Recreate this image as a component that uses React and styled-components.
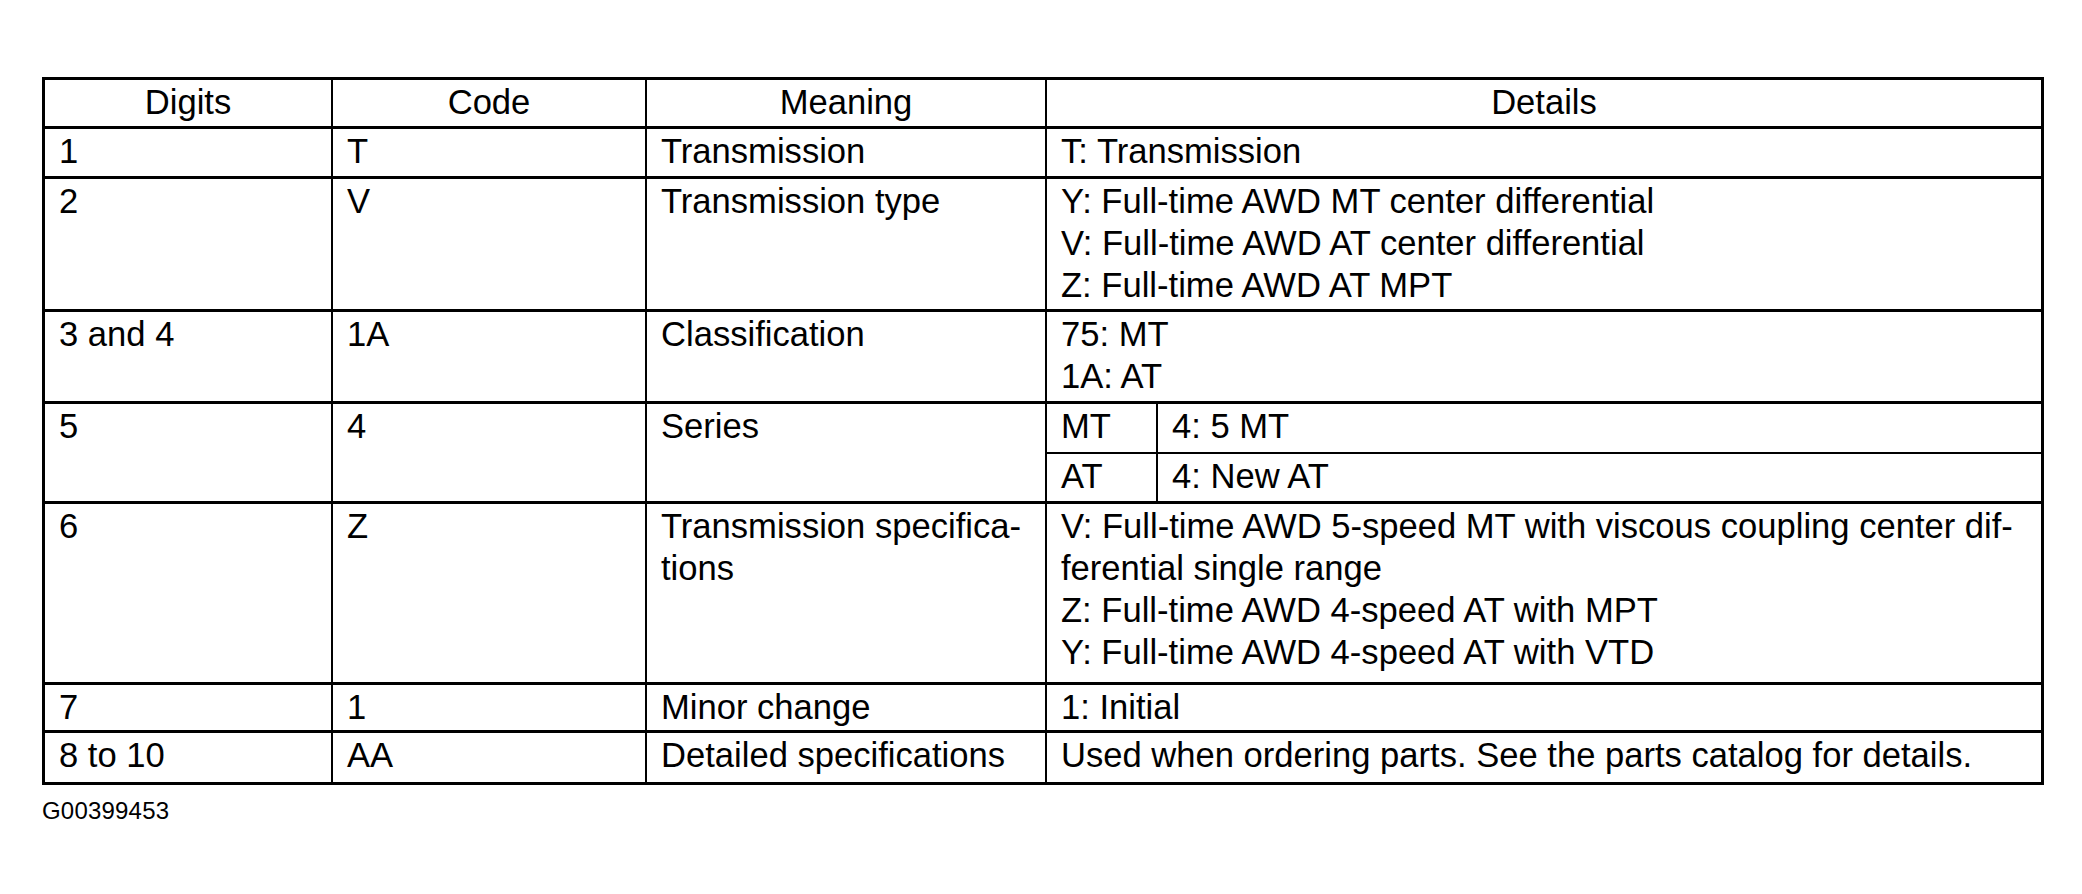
import React from "react";
import styled, { createGlobalStyle } from "styled-components";

const GlobalStyle = createGlobalStyle`
  html, body { margin: 0; padding: 0; background: #fff; }
  body { font-family: "Liberation Sans", Arial, Helvetica, sans-serif; color: #000; }
`;

const Page = styled.div`
  padding: 77px 0 0 42px;
`;

const Table = styled.div`
  box-sizing: border-box;
  width: 2002px;
  display: grid;
  grid-template-columns: 288px 314px 400px 994px;
  grid-template-rows: ${(p) => p.$rows};
  border: 3px solid #000;
`;

const Cell = styled.div`
  box-sizing: border-box;
  padding: 1px 14px 0;
  border-right: ${(p) => (p.$lastCol ? "0" : "2px")} solid #000;
  border-bottom: ${(p) => (p.$lastRow ? "0" : "3px")} solid #000;
  font-size: 34.6px;
  line-height: 42px;
  white-space: nowrap;
  text-align: ${(p) => (p.$center ? "center" : "left")};
`;

const SplitCell = styled.div`
  box-sizing: border-box;
  display: grid;
  grid-template-columns: 111px 1fr;
  grid-template-rows: 50px 1fr;
  border-bottom: 3px solid #000;
`;

const SubCell = styled.div`
  box-sizing: border-box;
  padding: 1px 14px 0;
  font-size: 34.6px;
  line-height: 42px;
  white-space: nowrap;
  border-right: ${(p) => (p.$right ? "2px" : "0")} solid #000;
  border-bottom: ${(p) => (p.$bottom ? "2px" : "0")} solid #000;
`;

const Line = styled.div``;

const Footnote = styled.div`
  margin: 14px 0 0 0;
  font-size: 24px;
  line-height: 24px;
  letter-spacing: 0.2px;
`;

const rows = [
  { h: 50, c: ["1", "T", ["Transmission"], ["T: Transmission"]] },
  {
    h: 133,
    c: [
      "2",
      "V",
      ["Transmission type"],
      [
        "Y: Full-time AWD MT center differential",
        "V: Full-time AWD AT center differential",
        "Z: Full-time AWD AT MPT",
      ],
    ],
  },
  { h: 92, c: ["3 and 4", "1A", ["Classification"], ["75: MT", "1A: AT"]] },
  { h: 100, c: ["5", "4", ["Series"], null], split: [["MT", "4: 5 MT"], ["AT", "4: New AT"]] },
  {
    h: 181,
    c: [
      "6",
      "Z",
      ["Transmission specifica-", "tions"],
      [
        "V: Full-time AWD 5-speed MT with viscous coupling center dif-",
        "ferential single range",
        "Z: Full-time AWD 4-speed AT with MPT",
        "Y: Full-time AWD 4-speed AT with VTD",
      ],
    ],
  },
  { h: 48, c: ["7", "1", ["Minor change"], ["1: Initial"]] },
  {
    h: 49,
    c: [
      "8 to 10",
      "AA",
      ["Detailed specifications"],
      ["Used when ordering parts. See the parts catalog for details."],
    ],
  },
];

const headers = ["Digits", "Code", "Meaning", "Details"];

export default function App() {
  const template = [49, ...rows.map((r) => r.h)].map((h) => `${h}px`).join(" ");
  return (
    <>
      <GlobalStyle />
      <Page>
        <Table $rows={template}>
          {headers.map((h, i) => (
            <Cell key={h} $center $lastCol={i === 3}>
              {h}
            </Cell>
          ))}
          {rows.map((r, ri) => {
            const lastRow = ri === rows.length - 1;
            return (
              <React.Fragment key={ri}>
                <Cell $lastRow={lastRow}>{r.c[0]}</Cell>
                <Cell $lastRow={lastRow}>{r.c[1]}</Cell>
                <Cell $lastRow={lastRow}>
                  {r.c[2].map((t) => (
                    <Line key={t}>{t}</Line>
                  ))}
                </Cell>
                {r.split ? (
                  <SplitCell>
                    {r.split.map((pair, pi) => (
                      <React.Fragment key={pi}>
                        <SubCell $right $bottom={pi === 0}>
                          {pair[0]}
                        </SubCell>
                        <SubCell $bottom={pi === 0}>{pair[1]}</SubCell>
                      </React.Fragment>
                    ))}
                  </SplitCell>
                ) : (
                  <Cell $lastCol $lastRow={lastRow}>
                    {r.c[3].map((t) => (
                      <Line key={t}>{t}</Line>
                    ))}
                  </Cell>
                )}
              </React.Fragment>
            );
          })}
        </Table>
        <Footnote>G00399453</Footnote>
      </Page>
    </>
  );
}
